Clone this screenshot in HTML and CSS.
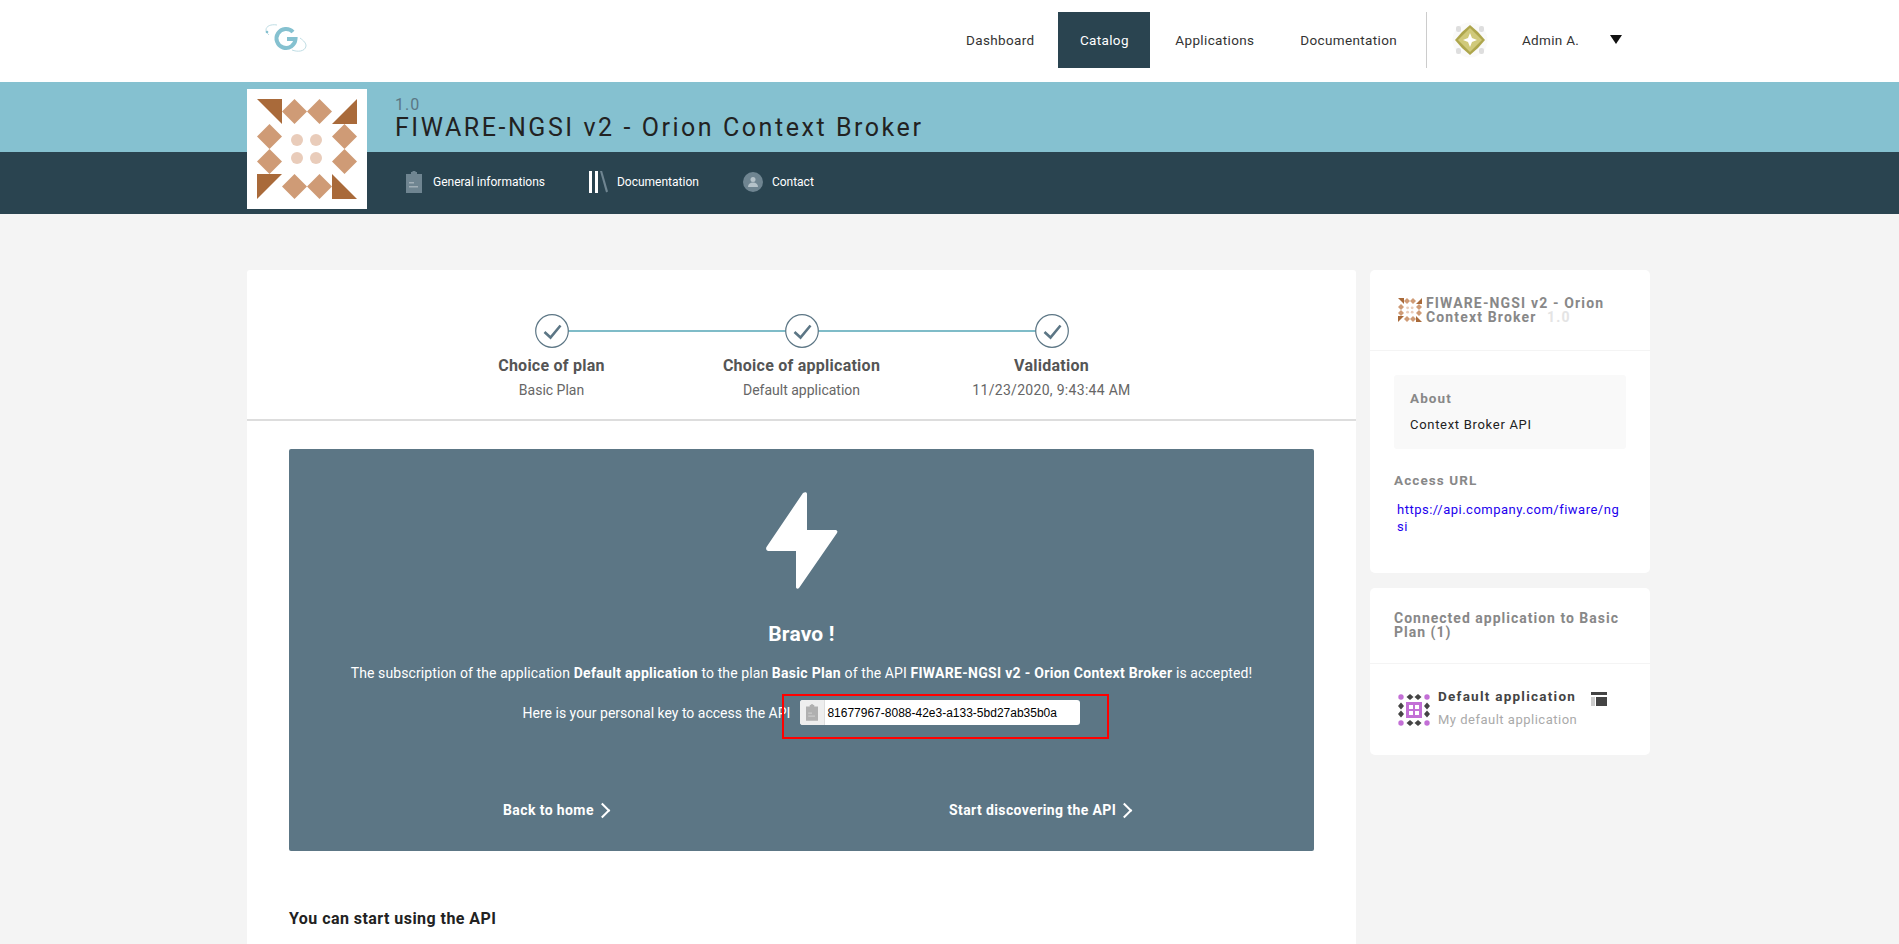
FILE: index.html
```html
<!DOCTYPE html>
<html lang="en">
<head>
    <meta charset="UTF-8">
    <meta name="viewport" content="width=device-width, initial-scale=1.0">
    <title>FIWARE-NGSI v2 - Orion Context Broker</title>
    <link rel="stylesheet" href="styles.css">
</head>
<body>
    <svg class="defs" width="0" height="0">
        <symbol id="apiAvatar" viewBox="0 0 120 120">
            <g fill="#a96a3a">
                <polygon points="10,10 35,10 35,35"/>
                <polygon points="110,10 110,35 85,35"/>
                <polygon points="10,85 35,85 10,110"/>
                <polygon points="85,85 110,110 85,110"/>
            </g>
            <g fill="#cf9b76">
                <polygon points="47.5,10 60,22.500 47.5,35 35,22.500"/>
                <polygon points="72.5,10 85,22.500 72.5,35 60,22.500"/>
                <polygon points="22.5,35 35,47.5 22.5,60 10,47.5"/>
                <polygon points="97.5,35 110,47.5 97.5,60 85,47.5"/>
                <polygon points="22.5,60 35,72.5 22.5,85 10,72.5"/>
                <polygon points="97.5,60 110,72.5 97.5,85 85,72.5"/>
                <polygon points="47.5,85 60,97.5 47.5,110 35,97.5"/>
                <polygon points="72.5,85 85,97.5 72.5,110 60,97.5"/>
            </g>
            <g fill="#e9ccba">
                <circle cx="50" cy="51" r="6"/>
                <circle cx="69" cy="51" r="6"/>
                <circle cx="50" cy="69" r="6"/>
                <circle cx="69" cy="69" r="6"/>
            </g>
        </symbol>
        <symbol id="check" viewBox="0 0 34 34">
            <circle cx="17" cy="17" r="16.300" fill="#fff" stroke="#5c7685" stroke-width="1.200"/>
            <path d="M9.500 18l6 5.500 10-12" fill="none" stroke="#5c7685" stroke-width="2.600"/>
        </symbol>
        <symbol id="clipboard" viewBox="0 0 16 22">
            <path d="M0 3h5V1h1.500V0h3v1H11v2h5v19H0z"/>
            <path d="M3 11h5v1.500H3zM3 15h9v1.500H3z" fill="#fff" fill-opacity=".35"/>
        </symbol>
    </svg>

    <header class="topbar">
        <svg class="logo" width="44" height="28" viewBox="0 0 44 28">
            <path d="M13 1C7 0 2 2 2 6c0 2 1 3 3 5" fill="none" stroke="#bfdde4" stroke-width="1"/>
            <path d="M28 26c5 2 13 2 14-4 0-3-2-5-6-8" fill="none" stroke="#bfdde4" stroke-width="1"/>
            <path d="M29 8A9.500 9.500 0 1 0 31.500 15H23" fill="none" stroke="#85c1d0" stroke-width="4"/>
            <circle cx="3" cy="8" r="1.300" fill="#85c1d0"/>
        </svg>
        <nav class="mainNav">
            <a class="navItem">Dashboard</a>
            <a class="navItem active">Catalog</a>
            <a class="navItem">Applications</a>
            <a class="navItem">Documentation</a>
        </nav>
        <div class="userMenu">
            <svg width="36" height="36" viewBox="0 0 36 36">
                <circle cx="18" cy="18" r="17.500" fill="#fafafa"/>
                <g fill="#dedede">
                    <rect x="4" y="4" width="5" height="6" rx="2"/><rect x="27" y="4" width="5" height="6" rx="2"/>
                    <rect x="4" y="26" width="5" height="6" rx="2"/><rect x="27" y="26" width="5" height="6" rx="2"/>
                </g>
                <path d="M18 3l8 7h-8zM18 3l-8 7h8zM33 18l-7-8v8zM33 18l-7 8v-8zM18 33l8-7h-8zM18 33l-8-7h8zM3 18l7-8v8zM3 18l7 8v-8z" fill="#aea64c"/>
                <rect x="10" y="10" width="16" height="16" fill="#aea64c"/>
                <polygon points="18,6 30,18 18,30 6,18" fill="#d0c97a"/>
                <polygon points="18,11 20,16 25,18 20,20 18,25 16,20 11,18 16,16" fill="#fff"/>
            </svg>
            <span class="userName">Admin A.</span>
            <span class="caret"></span>
        </div>
    </header>

    <section class="banner">
        <svg class="apiAvatar"><use href="#apiAvatar"/></svg>
        <div class="bannerTitle">
            <div class="apiVersion">1.0</div>
            <h1 class="apiName">FIWARE-NGSI v2 - Orion Context Broker</h1>
        </div>
        <nav class="subNav">
            <a class="subItem">
                <svg class="subIcon" width="16" height="22" fill="#6f8591"><use href="#clipboard"/></svg>
                General informations
            </a>
            <a class="subItem">
                <svg class="subIcon" width="19" height="22" viewBox="0 0 19 22">
                    <path d="M0 0h3v22H0zM6 0h3v22H6z" fill="#fff"/>
                    <path d="M11 0l2-.5 6 21-2 1z" fill="#6f8591"/>
                </svg>
                Documentation
            </a>
            <a class="subItem">
                <svg class="subIcon" width="20" height="20" viewBox="0 0 20 20">
                    <circle cx="10" cy="10" r="10" fill="#6f8591"/>
                    <circle cx="10" cy="7.500" r="2.500" fill="#b5c2c9"/>
                    <path d="M5 15c0-3 2-4.500 5-4.500s5 1.500 5 4.500z" fill="#b5c2c9"/>
                </svg>
                Contact
            </a>
        </nav>
    </section>

    <main class="content">
        <div class="card mainCard">
            <div class="stepper">
                <div class="step">
                    <svg class="stepCheck"><use href="#check"/></svg>
                    <div class="stepTitle">Choice of plan</div>
                    <div class="stepSub">Basic Plan</div>
                </div>
                <div class="step">
                    <svg class="stepCheck"><use href="#check"/></svg>
                    <div class="stepTitle">Choice of application</div>
                    <div class="stepSub">Default application</div>
                </div>
                <div class="step">
                    <svg class="stepCheck"><use href="#check"/></svg>
                    <div class="stepTitle">Validation</div>
                    <div class="stepSub">11/23/2020, 9:43:44 AM</div>
                </div>
            </div>

            <div class="bravoPanel">
                <svg class="bolt" width="72" height="97" viewBox="0 0 72 97">
                    <path d="M37 1L.5 55c-1 2 0 4 2 4H30v36c0 2 2 2 3 1L71 41c1-2 0-3-2-3H41V2c0-2-2-2-4-1z" fill="#fff"/>
                </svg>
                <h2 class="bravoTitle">Bravo !</h2>
                <p class="bravoText">The subscription of the application <b>Default application</b> to the plan <b>Basic Plan</b> of the API <b>FIWARE-NGSI v2 - Orion Context Broker</b> is accepted!</p>
                <div class="keyRow">
                    <span>Here is your personal key to access the API</span>
                    <div class="keyBox">
                        <span class="keyAddon">
                            <svg width="12" height="17" fill="#b0b0b0"><use href="#clipboard"/></svg>
                        </span>
                        <span class="keyValue">81677967-8088-42e3-a133-5bd27ab35b0a</span>
                        <div class="redMark"></div>
                    </div>
                </div>
                <div class="bravoActions">
                    <a class="bravoLink">Back to home <span class="chevron"></span></a>
                    <a class="bravoLink">Start discovering the API <span class="chevron"></span></a>
                </div>
            </div>

            <h3 class="startTitle">You can start using the API</h3>
        </div>

        <aside class="sideCol">
            <div class="card sideCard">
                <div class="sideHead apiHead">
                    <svg class="sideApiIcon" viewBox="10 10 100 100"><use href="#apiAvatar" width="120" height="120"/></svg>
                    <div class="sideTitle">FIWARE-NGSI v2 - Orion Context Broker <span class="sideVersion">1.0</span></div>
                </div>
                <div class="sideBody">
                    <div class="aboutBox">
                        <div class="sideLabel">About</div>
                        <div class="aboutText">Context Broker API</div>
                    </div>
                    <div class="sideLabel accessLabel">Access URL</div>
                    <a class="accessUrl">https://api.company.com/fiware/ngsi</a>
                </div>
            </div>
            <div class="card sideCard">
                <div class="sideHead connHead">
                    <div class="sideTitle">Connected application to Basic Plan (1)</div>
                </div>
                <div class="appRow">
                    <svg class="appIcon" width="32" height="32" viewBox="0 0 32 32">
                        <g fill="#c36fd6">
                            <circle cx="3" cy="3" r="2.700"/><circle cx="29" cy="3" r="2.700"/>
                            <circle cx="3" cy="29" r="2.700"/><circle cx="29" cy="29" r="2.700"/>
                            <rect x="8" y="8" width="16" height="16"/>
                        </g>
                        <g fill="#444">
                            <polygon points="12,0 15.500,3 12,6 8.500,3"/><polygon points="20,0 23.500,3 20,6 16.500,3"/>
                            <polygon points="12,26 15.500,29 12,32 8.500,29"/><polygon points="20,26 23.500,29 20,32 16.500,29"/>
                            <polygon points="3,8.500 6,12 3,15.500 0,12"/><polygon points="29,8.500 32,12 29,15.500 26,12"/>
                            <polygon points="3,16.500 6,20 3,23.500 0,20"/><polygon points="29,16.500 32,20 29,23.500 26,20"/>
                        </g>
                        <g fill="#fff">
                            <rect x="11" y="11" width="4" height="4"/><rect x="17" y="11" width="4" height="4"/>
                            <rect x="11" y="17" width="4" height="4"/><rect x="17" y="17" width="4" height="4"/>
                        </g>
                    </svg>
                    <div class="appInfo">
                        <div class="appName">Default application</div>
                        <div class="appDesc">My default application</div>
                    </div>
                    <svg class="appBadge" width="17" height="14" viewBox="0 0 17 14">
                        <rect width="16" height="3" fill="#444"/>
                        <rect y="5" width="4" height="9" fill="#ccc"/>
                        <rect x="5" y="5" width="11" height="9" fill="#444"/>
                    </svg>
                </div>
            </div>
        </aside>
    </main>
</body>
</html>
```

FILE: styles.css
```css
html, body {
    height: 100%;
    overflow: hidden;
}
body {
    margin: 0;
    background: #f4f4f4;
    color: #222;
    font-family: Roboto, "Open Sans", sans-serif;
    font-size: 14px;
}
h1, h2, h3, p {
    margin: 0;
}
.defs {
    position: absolute;
}

/* Top bar */
.topbar {
    display: flex;
    height: 82px;
    box-sizing: border-box;
    padding: 12px 0 14px 264px;
    background: #fff;
}
.logo {
    margin-top: 12px;
}
.mainNav {
    display: flex;
    margin-left: auto;
}
.navItem {
    display: flex;
    align-items: center;
    padding: 0 23px;
    color: #333;
    font-size: 13.500px;
    letter-spacing: .35px;
}
.navItem.active {
    margin: 0 2px 0 1px;
    padding: 0 21.500px;
    background: #2a4450;
    color: #fff;
}
.userMenu {
    display: flex;
    align-items: center;
    width: 223px;
    margin-left: 6px;
    margin-right: 250px;
    padding-left: 25px;
    box-sizing: border-box;
    border-left: 1px solid #ccc;
}
.userName {
    margin-left: 34px;
    color: #333;
    font-size: 13.500px;
    letter-spacing: .3px;
}
.caret {
    margin-left: 31px;
    margin-top: -2px;
    border-left: 6px solid transparent;
    border-right: 6px solid transparent;
    border-top: 9px solid #111;
}

/* Banner */
.banner {
    position: relative;
}
.apiAvatar {
    position: absolute;
    top: 7px;
    left: 247px;
    width: 120px;
    height: 120px;
    background: #fff;
}
.bannerTitle {
    height: 70px;
    box-sizing: border-box;
    padding: 15px 0 0 395px;
    background: #85c1d0;
}
.apiVersion {
    color: #5b7784;
    font-size: 16px;
    line-height: 16px;
    letter-spacing: 1px;
}
.apiName {
    margin-top: 2px;
    color: #222;
    font-size: 25px;
    font-weight: 400;
    line-height: 26px;
    letter-spacing: 2.550px;
}
.subNav {
    display: flex;
    align-items: center;
    height: 62px;
    box-sizing: border-box;
    padding: 0 0 2px 406px;
    gap: 44px;
    background: #2a4450;
}
.subItem {
    display: flex;
    align-items: center;
    color: #fff;
    font-size: 12px;
}
.subIcon {
    margin-right: 9px;
}
.subItem:first-child .subIcon {
    margin-right: 11px;
}

/* Layout */
.content {
    display: flex;
    gap: 14px;
    padding: 56px 0 0 247px;
}
.card {
    background: #fff;
    border-radius: 3px;
}
.mainCard {
    width: 1109px;
    height: 800px;
}
.sideCol {
    display: flex;
    flex-direction: column;
    gap: 15px;
    width: 280px;
}

/* Stepper */
.stepper {
    display: flex;
    justify-content: center;
    height: 105px;
    padding-top: 44px;
    border-bottom: 2px solid #ddd;
}
.step {
    position: relative;
    display: flex;
    flex-direction: column;
    align-items: center;
    width: 250px;
}
.step:not(:last-child)::after {
    content: "";
    position: absolute;
    top: 16px;
    left: 50%;
    width: 100%;
    height: 2px;
    background: #7fbcc8;
}
.stepCheck {
    position: relative;
    z-index: 1;
    width: 34px;
    height: 34px;
}
.stepTitle {
    margin-top: 8px;
    color: #555;
    font-size: 16px;
    font-weight: 700;
    line-height: 20px;
    letter-spacing: .25px;
}
.stepSub {
    margin-top: 5px;
    color: #666;
    font-size: 14px;
    line-height: 18px;
}
.step:last-child .stepSub {
    letter-spacing: .3px;
}

/* Bravo panel */
.bravoPanel {
    display: flex;
    flex-direction: column;
    align-items: center;
    height: 402px;
    box-sizing: border-box;
    margin: 28px 42px 0;
    padding-top: 43px;
    background: #5c7685;
    border-radius: 2px;
    color: #fff;
    font-size: 14px;
}
.bravoTitle {
    margin-top: 33px;
    font-size: 21px;
    line-height: 24px;
    letter-spacing: .2px;
}
.bravoText {
    margin-top: 17px;
    line-height: 20px;
    letter-spacing: .1px;
}
.bravoText b {
    letter-spacing: .3px;
}
.keyRow {
    display: flex;
    align-items: center;
    gap: 10px;
    margin-top: 17px;
}
.keyBox {
    position: relative;
    display: flex;
    align-items: center;
    width: 280px;
    height: 25px;
    background: #fff;
    border-radius: 3px;
}
.keyAddon {
    display: flex;
    align-items: center;
    justify-content: center;
    width: 24px;
    height: 25px;
    background: #eee;
    border-right: 1px solid #ddd;
    border-radius: 3px 0 0 3px;
}
.keyValue {
    margin-left: 2px;
    color: #000;
    font-family: "Liberation Sans", Arial, sans-serif;
    font-size: 12px;
}
.redMark {
    position: absolute;
    top: -6px;
    right: -29px;
    bottom: -14px;
    left: -18px;
    border: 2px solid #f00;
}
.bravoActions {
    display: grid;
    grid-template-columns: 446px auto;
    align-self: flex-start;
    margin-top: 75px;
    padding-left: 214px;
}
.bravoLink {
    display: flex;
    align-items: center;
    gap: 3px;
    font-weight: 700;
    line-height: 20px;
    letter-spacing: .4px;
}
.chevron {
    width: 9px;
    height: 9px;
    border-top: 2px solid #fff;
    border-right: 2px solid #fff;
    transform: rotate(45deg);
}
.startTitle {
    margin: 58px 0 0 42px;
    color: #222;
    font-size: 16px;
    line-height: 20px;
    letter-spacing: .45px;
}

/* Side cards */
.sideCard {
    border-radius: 5px;
}
.sideHead {
    border-bottom: 1px solid #f4f4f4;
}
.apiHead {
    display: flex;
    align-items: center;
    gap: 4px;
    height: 81px;
    box-sizing: border-box;
    padding: 0 20px 0 28px;
}
.sideApiIcon {
    flex: none;
    width: 24px;
    height: 24px;
}
.sideTitle {
    color: #888;
    font-size: 14px;
    font-weight: 700;
    line-height: 14px;
    letter-spacing: 1.150px;
}
.connHead .sideTitle {
    letter-spacing: 1px;
}
.sideVersion {
    margin-left: 6px;
    color: #e4e4e4;
}
.sideBody {
    height: 222px;
    box-sizing: border-box;
    padding: 24px 24px 0;
}
.aboutBox {
    height: 74px;
    box-sizing: border-box;
    padding: 14px 16px;
    background: #f9f9f9;
    border-radius: 3px;
}
.sideLabel {
    color: #888;
    font-size: 13.500px;
    font-weight: 700;
    line-height: 18px;
    letter-spacing: 1.100px;
}
.aboutText {
    margin-top: 9px;
    color: #222;
    font-size: 13px;
    line-height: 18px;
    letter-spacing: .7px;
}
.accessLabel {
    margin-top: 22px;
}
.accessUrl {
    display: block;
    width: 226px;
    margin: 12px 0 0 3px;
    color: #2200ee;
    font-size: 13px;
    line-height: 17px;
    letter-spacing: .5px;
    word-break: break-all;
}
.connHead {
    height: 76px;
    box-sizing: border-box;
    padding: 23px 24px 0;
}
.appRow {
    display: flex;
    height: 91px;
    box-sizing: border-box;
    padding: 24px 0 0 28px;
}
.appIcon {
    margin-top: 6px;
}
.appInfo {
    margin-left: 8px;
}
.appName {
    color: #444;
    font-size: 13.500px;
    font-weight: 700;
    line-height: 16px;
    letter-spacing: 1.250px;
}
.appDesc {
    margin-top: 8px;
    color: #aaa;
    font-size: 13px;
    line-height: 16px;
    letter-spacing: .5px;
}
.appBadge {
    margin-left: 14px;
    margin-top: 4px;
}
```
